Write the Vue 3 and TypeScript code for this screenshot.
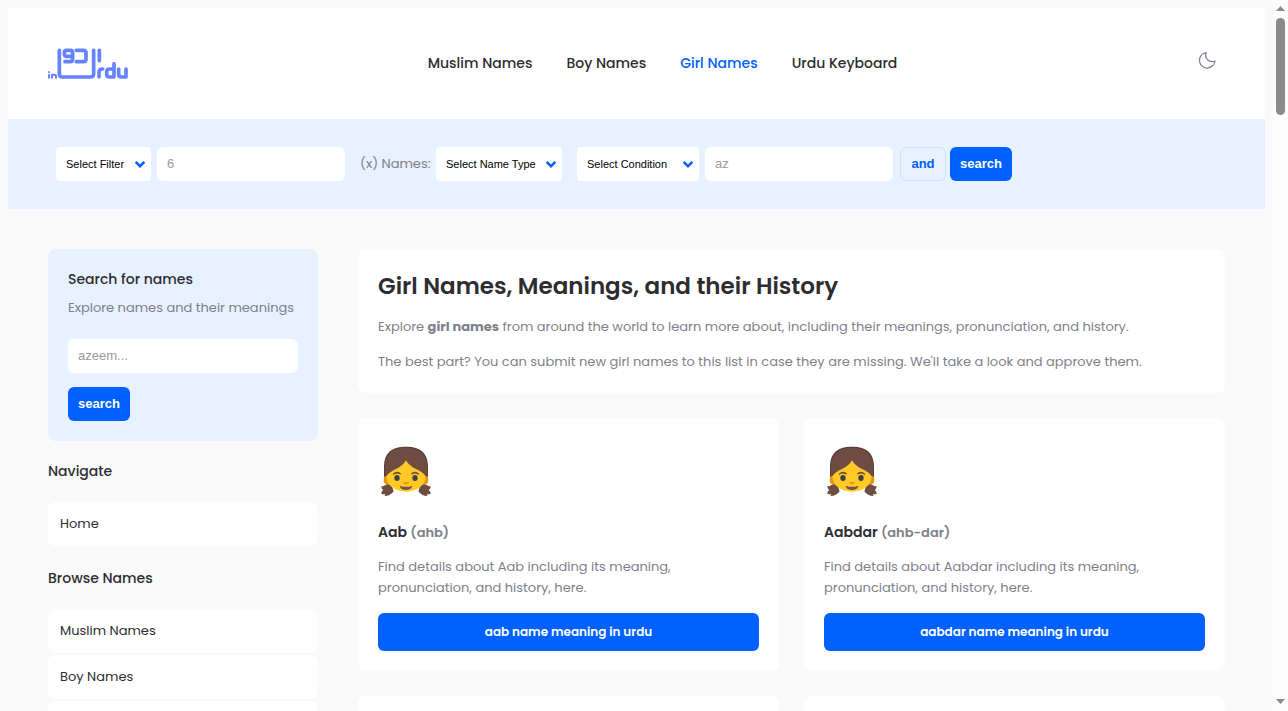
<script setup lang="ts">
import { ref } from 'vue'

interface NavLink { label: string; active?: boolean }
interface NameCard { name: string; say: string }

const navLinks: NavLink[] = [
  { label: 'Muslim Names' },
  { label: 'Boy Names' },
  { label: 'Girl Names', active: true },
  { label: 'Urdu Keyboard' },
]
const browseLinks: string[] = ['Muslim Names', 'Boy Names']
const cards: NameCard[] = [
  { name: 'Aab', say: 'ahb' },
  { name: 'Aabdar', say: 'ahb-dar' },
]
const count = ref('')
const letters = ref('')
const query = ref('')
</script>

<template>
  <div class="window">
    <div class="page">
      <header class="top">
        <a href="#" class="logo" aria-label="Urdu">
          <svg viewBox="24 21 240 96" width="80" height="32" fill="none" stroke="#6583ff" stroke-width="11" stroke-linecap="round" stroke-linejoin="round">
            <path d="M58 31V102Q58 111 67 111H152Q161 111 161 102V31" />
            <path d="M98 46V38Q98 31 91 31H80Q73 31 73 38V42Q73 49 80 49H98M98 45V57Q98 65 90 65H75" />
            <path d="M109 31H130Q138 31 138 39V57Q138 65 130 65H109" />
            <path d="M178 31V62" />
            <path d="M177 111V96Q177 87 188 87" />
            <path d="M222 71V111H209Q200 111 200 103V95Q200 87 209 87H222" />
            <path d="M236 87V103Q236 111 244 111H258V87" />
            <path stroke-width="6" d="M27 105V113M27 96V97M36 113V104H43Q48 104 48 109V113" />
          </svg>
        </a>
        <nav class="nav">
          <a v-for="l in navLinks" :key="l.label" href="#" :class="{ active: l.active }">{{ l.label }}</a>
        </nav>
        <button class="theme" aria-label="Dark mode">
          <svg viewBox="0 0 20 20" width="20" height="20" fill="none" stroke="#7f7f8e" stroke-width="1.2" stroke-linejoin="round">
            <path d="M9.200 2.500A7.800 7.800 0 1 0 18 11C12.500 13 7 9 9.200 2.500Z" />
          </svg>
        </button>
      </header>

      <form class="filters" @submit.prevent>
        <select class="s-filter" aria-label="Filter"><option>Select Filter</option></select>
        <input v-model="count" class="field" aria-label="Count" placeholder="6">
        <span class="caption">(x) Names:</span>
        <select class="s-type" aria-label="Name type"><option>Select Name Type</option></select>
        <select class="s-cond" aria-label="Condition"><option>Select Condition</option></select>
        <input v-model="letters" class="field" aria-label="Letters" placeholder="az">
        <button type="button" class="btn outline">and</button>
        <button class="btn">search</button>
      </form>

      <div class="body">
        <aside class="side">
          <form class="search" @submit.prevent>
            <h2>Search for names</h2>
            <label for="q">Explore names and their meanings</label>
            <input id="q" v-model="query" placeholder="azeem...">
            <button class="btn">search</button>
          </form>
          <h2 class="group">Navigate</h2>
          <a class="item" href="#">Home</a>
          <h2 class="group second">Browse Names</h2>
          <a v-for="b in browseLinks" :key="b" class="item" href="#">{{ b }}</a>
          <div class="item blank"></div>
        </aside>

        <main class="content">
          <section class="intro">
            <h1>Girl Names, Meanings, and their History</h1>
            <p>Explore <strong>girl names</strong> from around the world to learn more about, including their meanings, pronunciation, and history.</p>
            <p>The best part? You can submit new girl names to this list in case they are missing. We'll take a look and approve them.</p>
          </section>
          <article v-for="c in cards" :key="c.name" class="card">
            <svg class="face" viewBox="0 0 168 168" width="56" height="56" aria-hidden="true">
              <path fill="#6d4c41" d="M26 118Q16 126 9 124Q11 132 16 135Q9 140 10 146Q15 149 21 147L20 153Q37 153 47 139L40 118ZM142 118Q152 126 159 124Q157 132 152 135Q159 140 158 146Q153 149 147 147L148 153Q131 153 121 139L128 118Z" />
              <path fill="#5a3e35" d="M84 5C42 4 19 24 18 62V92Q18 98 24 103H144Q150 98 150 92V62C149 24 126 4 84 5Z" />
              <ellipse cx="28" cy="105" rx="11" ry="13" fill="#e59600" />
              <ellipse cx="140" cy="105" rx="11" ry="13" fill="#e59600" />
              <path fill="#ffca28" d="M84 42C40 43 25 62 25 94C25 122 53 140 84 140C115 140 143 122 143 94C143 62 128 43 84 42Z" />
              <path fill="#6d4c41" d="M84 8C43 7 22 27 21 66V92L25 94C30 86 40 79 52 73C67 66 78 57 84 46C90 57 101 66 116 73C128 79 138 86 143 94L147 92V66C146 27 125 7 84 8Z" />
              <path fill="none" stroke="#6d4c41" stroke-width="5" stroke-linecap="round" d="M47 87Q56 79 66 86M102 86Q112 79 121 87" />
              <ellipse cx="57" cy="99" rx="8" ry="9" fill="#404040" />
              <ellipse cx="111" cy="99" rx="8" ry="9" fill="#404040" />
              <path fill="#e59600" d="M75 110Q84 114 93 110Q91 118 84 118Q77 118 75 110Z" />
              <path fill="#795548" d="M65 122Q84 129 103 122Q100 135 84 135Q68 135 65 122Z" />
            </svg>
            <h3>{{ c.name }} <small>({{ c.say }})</small></h3>
            <p>Find details about {{ c.name }} including its meaning, pronunciation, and history, here.</p>
            <a class="more" href="#">{{ c.name.toLowerCase() }} name meaning in urdu</a>
          </article>
          <div class="card"></div>
          <div class="card"></div>
        </main>
      </div>
    </div>
    <div class="scroll" aria-hidden="true">
      <svg viewBox="0 0 9 5" width="9" height="5"><path d="M0 5L4.500 0L9 5Z" fill="#8b8b8b" /></svg>
      <span class="thumb"></span>
      <svg class="down" viewBox="0 0 9 5" width="9" height="5"><path d="M0 0L4.500 5L9 0Z" fill="#8b8b8b" /></svg>
    </div>
  </div>
</template>

<style>
body { background: #fafafa; }
</style>

<style scoped>
* { box-sizing: border-box; }
.window {
  display: flex;
  height: 100vh;
  overflow: hidden;
  font-family: Poppins, Inter, sans-serif;
  font-size: 13px;
  line-height: 21px;
  color: #7f7f8a;
}
.page { flex: 1; min-width: 0; padding: 8px; }
a { text-decoration: none; color: #2d2d31; }
h1, h2, h3, p { margin: 0; color: #2d2d31; }
.top {
  display: flex;
  justify-content: space-between;
  align-items: center;
  background: #fff;
  padding: 38px 48px 39px 40px;
}
.logo { display: flex; }
.nav { display: flex; gap: 34px; font-size: 14px; line-height: 34px; font-weight: 500; }
.nav .active { color: #0061ff; }
.theme { display: flex; padding: 0 0 6px; border: 0; background: none; }
.filters { display: flex; align-items: center; background: #e7f1ff; padding: 28px 48px; }
input, select, .btn { font-family: "Liberation Sans", Arial, sans-serif; height: 34px; border: 0; }
input { width: 188px; border-radius: 6px; padding: 0 10px 2px; font-size: 13px; background: #fff; }
input::placeholder { color: #9a9aa0; }
select {
  appearance: none;
  border-radius: 4px;
  padding: 0 10px;
  font-size: 11px;
  color: #000;
  background: #fff url("data:image/svg+xml,%3Csvg xmlns='http://www.w3.org/2000/svg' width='10' height='7'%3E%3Cpath d='M.7.9l4.300 4.300 4.300-4.300' fill='none' stroke='%230061ff' stroke-width='2.400'/%3E%3C/svg%3E") no-repeat right 6px top 14px;
}
.s-filter { width: 95px; margin-right: 6px; }
.caption { width: 76px; margin-left: 15px; padding-bottom: 2px; }
.s-type { width: 126px; margin-right: 15px; }
.s-cond { width: 122px; margin-right: 6px; }
.btn { background: #0061ff; color: #fff; font-size: 13px; font-weight: 700; padding: 0 10px 2px; border-radius: 6px; }
.outline { min-width: 46px; background: #e7f1ff; color: #0061ff; border: 1px solid #cfe3ff; margin: 0 4px 0 7px; }
.body { display: flex; gap: 40px; padding: 40px; align-items: flex-start; }
.side { width: 270px; flex: none; }
.side h2 { font-size: 14px; line-height: 20px; font-weight: 500; }
.search { background: #e7f1ff; border-radius: 8px; padding: 20px; }
.search label { display: block; margin: 8px 0 21px; white-space: nowrap; }
.search input { display: block; width: 100%; margin-bottom: 14px; }
.search .btn { display: block; }
.side .group { margin: 20px 0 21px; }
.side .second { margin-top: 22px; }
.item { display: block; background: #fff; border-radius: 8px; padding: 11px 12px 12px; margin-bottom: 2px; }
.blank { min-height: 44px; }
.content { flex: 1; display: grid; grid-template-columns: 1fr 1fr; gap: 25px; }
.intro { grid-column: 1 / -1; background: #fff; border-radius: 8px; padding: 20px 20px 21px; }
.intro h1 { font-size: 23px; line-height: 34px; font-weight: 600; margin-bottom: 13px; }
.intro p, .card p { color: #7f7f8a; }
.intro p + p { margin-top: 14px; }
.card { background: #fff; border-radius: 8px; padding: 27px 20px 20px; }
.face { display: block; margin-bottom: 21px; }
.card h3 { font-size: 14px; line-height: 20px; font-weight: 600; margin-bottom: 13px; }
.card small { font-size: 13px; color: #7f7f8a; }
.card p { max-width: 320px; margin-bottom: 15px; }
.more { display: block; background: #0061ff; color: #fff; border-radius: 6px; text-align: center; font-size: 12px; font-weight: 600; line-height: 38px; }
.scroll { width: 15px; display: flex; flex-direction: column; align-items: center; padding: 6px 0 7px; background: #fcfcfc; }
.thumb { width: 9px; height: 97px; margin-top: 7px; border-radius: 5px; background: #8b8b8b; }
.down { margin-top: auto; }
</style>
